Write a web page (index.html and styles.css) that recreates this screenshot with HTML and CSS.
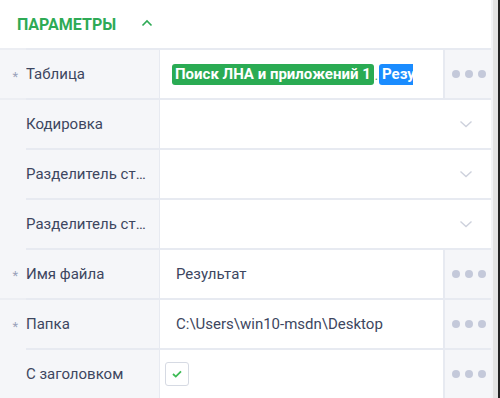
FILE: index.html
```html
<!DOCTYPE html>
<html lang="ru">
<head>
    <meta charset="UTF-8">
    <meta name="viewport" content="width=device-width, initial-scale=1.0">
    <title>Параметры</title>
    <link rel="stylesheet" href="styles.css">
</head>
<body>
    <div class="page">
        <div class="panel">
            <div class="panel-header">
                <span class="panel-title">ПАРАМЕТРЫ</span>
                <svg class="collapse-icon" width="12" height="8" viewBox="0 0 12 8">
                    <path d="M1.5 6.5 L6 2 L10.5 6.5" fill="none" stroke="#2eaa55" stroke-width="1.6"/>
                </svg>
            </div>

            <div class="param-row split">
                <div class="param-star">*</div>
                <div class="param-label">Таблица</div>
                <div class="param-value">
                    <div class="tags">
                        <span class="tag tag-green">Поиск ЛНА и приложений 1</span><span class="tag-dot">.</span><span class="tag tag-blue">Результат</span>
                    </div>
                </div>
                <div class="param-btn"><span class="dots"><i></i><i></i><i></i></span></div>
            </div>

            <div class="param-row split">
                <div class="param-star"></div>
                <div class="param-label" title="Кодировка">Кодировка</div>
                <div class="param-value wide">
                    <svg class="select-icon" width="14" height="8" viewBox="0 0 14 8">
                        <path d="M1.5 1.5 L7 6.5 L12.5 1.5" fill="none" stroke="#cdd1dc" stroke-width="1.4"/>
                    </svg>
                </div>
            </div>

            <div class="param-row">
                <div class="param-star"></div>
                <div class="param-label" title="Разделитель строк">Разделитель ст…</div>
                <div class="param-value wide">
                    <svg class="select-icon" width="14" height="8" viewBox="0 0 14 8">
                        <path d="M1.5 1.5 L7 6.5 L12.5 1.5" fill="none" stroke="#cdd1dc" stroke-width="1.4"/>
                    </svg>
                </div>
            </div>

            <div class="param-row">
                <div class="param-star"></div>
                <div class="param-label" title="Разделитель столбцов">Разделитель ст…</div>
                <div class="param-value wide">
                    <svg class="select-icon" width="14" height="8" viewBox="0 0 14 8">
                        <path d="M1.5 1.5 L7 6.5 L12.5 1.5" fill="none" stroke="#cdd1dc" stroke-width="1.4"/>
                    </svg>
                </div>
            </div>

            <div class="param-row">
                <div class="param-star">*</div>
                <div class="param-label">Имя файла</div>
                <div class="param-value">Результат</div>
                <div class="param-btn"><span class="dots"><i></i><i></i><i></i></span></div>
            </div>

            <div class="param-row split">
                <div class="param-star">*</div>
                <div class="param-label">Папка</div>
                <div class="param-value">C:\Users\win10-msdn\Desktop</div>
                <div class="param-btn"><span class="dots"><i></i><i></i><i></i></span></div>
            </div>

            <div class="param-row">
                <div class="param-star"></div>
                <div class="param-label">С заголовком</div>
                <div class="param-value check-cell">
                    <span class="checkbox">
                        <svg width="12" height="10" viewBox="0 0 12 10">
                            <path d="M2 5 L4.8 7.6 L10 2.4" fill="none" stroke="#3dbb55" stroke-width="1.8"/>
                        </svg>
                    </span>
                </div>
                <div class="param-btn"><span class="dots"><i></i><i></i><i></i></span></div>
            </div>
        </div>
        <div class="edge"></div>
    </div>
</body>
</html>
```

FILE: styles.css
```css
body {
    margin: 0;
    padding: 0;
    font-family: Roboto, "Noto Sans", Arial, sans-serif;
    background-color: #fff;
}

.page {
    display: flex;
    height: 398px;
    overflow: hidden;
}

.panel {
    width: 491px;
    flex-shrink: 0;
    background-color: #fff;
}

.edge {
    width: 2px;
    border-left: 2px solid #f3f4f7;
    border-right: 2px solid #222;
    background-color: #e3e3e3;
    flex-grow: 1;
}

.panel-header {
    height: 48px;
    display: flex;
    align-items: center;
    padding-left: 17px;
    box-sizing: border-box;
}

.panel-title {
    color: #2eaa55;
    font-size: 16px;
    font-weight: bold;
    margin-top: 1px;
}

.collapse-icon {
    margin-left: 25px;
    margin-top: -3px;
}

.param-row {
    display: grid;
    grid-template-columns: 26px 133px 1fr 48px;
    height: 50px;
    color: #3d4660;
    font-size: 15px;
}

.param-star,
.param-label {
    background-color: #f5f6f9;
}

.param-star {
    color: #9aa3bb;
    font-size: 13px;
    display: flex;
    align-items: center;
    justify-content: flex-end;
    padding-right: 8px;
    padding-top: 4px;
}

.param-row.split .param-star {
    border-top: 2px solid #eceef3;
}

.param-label,
.param-value,
.param-btn {
    border-top: 2px solid #e7eaf1;
}

.param-label {
    padding-right: 8px;
    min-width: 0;
    white-space: nowrap;
    overflow: hidden;
    line-height: 48px;
}

.param-value {
    border-left: 1px solid #e7eaf1;
    display: flex;
    align-items: center;
    padding-left: 16px;
    padding-right: 30px;
    min-width: 0;
    overflow: hidden;
    white-space: nowrap;
}

.param-value.wide {
    grid-column: 3 / 5;
    justify-content: flex-end;
    padding-right: 18px;
}

.param-value.check-cell {
    padding-left: 5px;
}

.tags {
    display: flex;
    align-items: center;
    overflow: hidden;
    margin-left: -4px;
}

.tag {
    color: #fff;
    font-weight: bold;
    font-size: 15px;
    padding: 2px 3px;
    border-radius: 3px;
    line-height: 17px;
}

.tag-green {
    background-color: #2aab53;
}

.tag-blue {
    background-color: #1a8cff;
    border-radius: 3px 0 0 3px;
}

.tag-dot {
    color: #2aab53;
    font-size: 12px;
    padding: 0 1px;
    align-self: flex-end;
    margin-bottom: 2px;
}

.param-btn {
    background-color: #f5f6f9;
    border-left: 2px solid #e7eaf1;
    display: flex;
    align-items: center;
    justify-content: center;
}

.dots {
    display: flex;
    gap: 5px;
    margin-left: 2px;
}

.dots i {
    width: 8px;
    height: 8px;
    border-radius: 50%;
    background-color: #c4c9da;
}

.checkbox {
    width: 22px;
    height: 22px;
    border: 1px solid #d6dae3;
    border-radius: 3px;
    display: flex;
    align-items: center;
    justify-content: center;
    background-color: #fff;
}
```
